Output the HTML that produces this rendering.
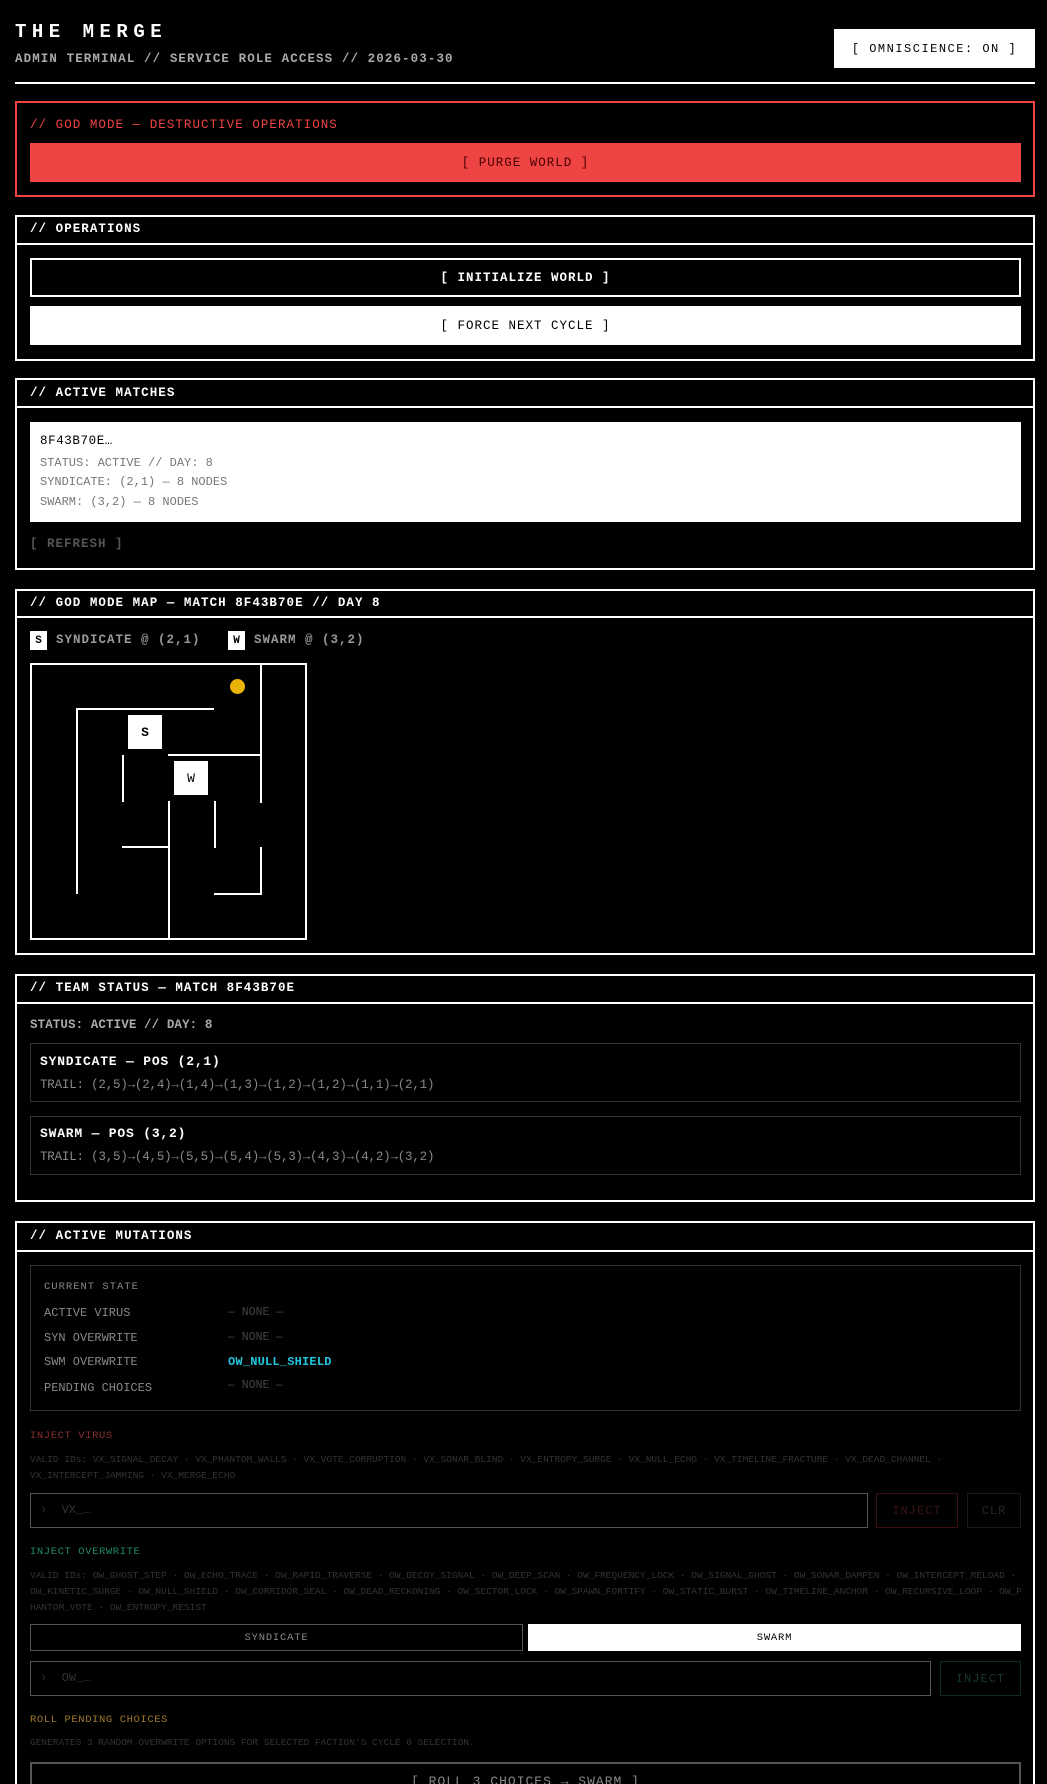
<!DOCTYPE html>
<html><head><meta charset="utf-8">
<style>
*{margin:0;padding:0;box-sizing:border-box}
html,body{width:1047px;height:1784px;background:#000;overflow:hidden}
body{position:relative;font-family:"Liberation Mono",monospace;color:#fff}
.a{position:absolute}
.t{position:absolute;white-space:nowrap;height:16px;line-height:16px}
.box{position:absolute;border:2px solid #fff}
.sep{position:absolute;height:2px;background:#fff}
.hd{font-size:12.5px;font-weight:bold;letter-spacing:1.05px;color:#fff}
.btn{position:absolute;display:flex;align-items:center;justify-content:center;font-size:12.5px;letter-spacing:1px;white-space:nowrap}
.w{position:absolute;background:#fff}
.ids{position:absolute;font-size:9.5px;line-height:16px;color:#333;white-space:nowrap;left:30px}
</style></head><body>

<div class="t" style="left:15px;top:22px;height:20px;line-height:20px;font-size:19px;font-weight:bold;letter-spacing:5.5px">THE MERGE</div>
<div class="t" style="left:15px;top:51px;font-size:12.5px;color:#aaa;font-weight:bold;letter-spacing:1.1px">ADMIN TERMINAL // SERVICE ROLE ACCESS // 2026-03-30</div>
<div class="btn" style="left:834px;top:29px;width:201px;height:39px;background:#fff;color:#000;font-size:12px;letter-spacing:1.5px">[ OMNISCIENCE: ON ]</div>
<div class="a" style="left:15px;top:82px;width:1020px;height:2px;background:#fff"></div>

<div class="box" style="left:15px;top:101px;width:1020px;height:96px;border-color:#ef4444"></div>
<div class="t hd" style="left:30px;top:117px;color:#ef4444;font-weight:normal">// GOD MODE — DESTRUCTIVE OPERATIONS</div>
<div class="btn" style="left:30px;top:143px;width:991px;height:39px;background:#ef4444;color:#4a0000">[ PURGE WORLD ]</div>

<div class="box" style="left:15px;top:215px;width:1020px;height:146px"></div>
<div class="t hd" style="left:30px;top:221px">// OPERATIONS</div>
<div class="sep" style="left:15px;top:243px;width:1020px"></div>
<div class="btn" style="left:30px;top:258px;width:991px;height:39px;border:2px solid #fff;font-weight:bold">[ INITIALIZE WORLD ]</div>
<div class="btn" style="left:30px;top:306px;width:991px;height:39px;background:#fff;color:#000">[ FORCE NEXT CYCLE ]</div>

<div class="box" style="left:15px;top:378px;width:1020px;height:192px"></div>
<div class="t hd" style="left:30px;top:385px">// ACTIVE MATCHES</div>
<div class="sep" style="left:15px;top:406px;width:1020px"></div>
<div class="a" style="left:30px;top:422px;width:991px;height:100px;background:#fff"></div>
<div class="t" style="left:40px;top:433px;font-size:12.5px;color:#000;letter-spacing:0.6px">8F43B70E…</div>
<div class="t" style="left:40px;top:455px;font-size:12px;color:#777">STATUS: ACTIVE // DAY: 8</div>
<div class="t" style="left:40px;top:474px;font-size:12px;color:#777">SYNDICATE: (2,1) — 8 NODES</div>
<div class="t" style="left:40px;top:494px;font-size:12px;color:#777">SWARM: (3,2) — 8 NODES</div>
<div class="t" style="left:30px;top:536px;font-size:12.5px;color:#555;font-weight:bold;letter-spacing:1px">[ REFRESH ]</div>

<div class="box" style="left:15px;top:589px;width:1020px;height:366px"></div>
<div class="t hd" style="left:30px;top:595px">// GOD MODE MAP — MATCH 8F43B70E // DAY 8</div>
<div class="sep" style="left:15px;top:616px;width:1020px"></div>
<div class="btn" style="left:30px;top:631px;width:17px;height:19px;background:#fff;color:#000;font-size:11px;letter-spacing:0;font-weight:bold">S</div>
<div class="t" style="left:56px;top:632px;font-size:12.5px;color:#999;font-weight:bold;letter-spacing:1px">SYNDICATE @ (2,1)</div>
<div class="btn" style="left:228px;top:631px;width:17px;height:19px;background:#fff;color:#000;font-size:11px;letter-spacing:0;font-weight:bold">W</div>
<div class="t" style="left:254px;top:632px;font-size:12.5px;color:#999;font-weight:bold;letter-spacing:1px">SWARM @ (3,2)</div>

<div class="a" style="left:30px;top:663px;width:277px;height:277px;border:2px solid #fff"></div>
<div class="w" style="left:76px;top:708px;width:138px;height:2px"></div>
<div class="w" style="left:76px;top:708px;width:2px;height:186px"></div>
<div class="w" style="left:260px;top:663px;width:2px;height:140px"></div>
<div class="w" style="left:168px;top:754px;width:94px;height:2px"></div>
<div class="w" style="left:122px;top:755px;width:2px;height:47px"></div>
<div class="w" style="left:168px;top:801px;width:2px;height:138px"></div>
<div class="w" style="left:214px;top:801px;width:2px;height:47px"></div>
<div class="w" style="left:122px;top:846px;width:48px;height:2px"></div>
<div class="w" style="left:260px;top:847px;width:2px;height:47px"></div>
<div class="w" style="left:214px;top:893px;width:48px;height:2px"></div>
<div class="btn" style="left:128px;top:715px;width:34px;height:34px;background:#fff;color:#000;font-size:13px;font-weight:bold;letter-spacing:0">S</div>
<div class="btn" style="left:174px;top:761px;width:34px;height:34px;background:#fff;color:#000;font-size:13px;letter-spacing:0">W</div>
<div class="a" style="left:230px;top:679px;width:15px;height:15px;border-radius:50%;background:#eab308"></div>

<div class="box" style="left:15px;top:974px;width:1020px;height:228px"></div>
<div class="t hd" style="left:30px;top:980px">// TEAM STATUS — MATCH 8F43B70E</div>
<div class="sep" style="left:15px;top:1002px;width:1020px"></div>
<div class="t" style="left:30px;top:1017px;font-size:12.5px;color:#aaa;font-weight:bold;letter-spacing:0.1px">STATUS: ACTIVE // DAY: 8</div>
<div class="a" style="left:30px;top:1043px;width:991px;height:59px;border:1px solid #333"></div>
<div class="t" style="left:40px;top:1054px;font-size:13px;font-weight:bold;letter-spacing:0.8px">SYNDICATE — POS (2,1)</div>
<div class="t" style="left:40px;top:1077px;font-size:12.5px;color:#888;letter-spacing:-0.2px">TRAIL: (2,5)→(2,4)→(1,4)→(1,3)→(1,2)→(1,2)→(1,1)→(2,1)</div>
<div class="a" style="left:30px;top:1116px;width:991px;height:59px;border:1px solid #333"></div>
<div class="t" style="left:40px;top:1126px;font-size:13px;font-weight:bold;letter-spacing:0.8px">SWARM — POS (3,2)</div>
<div class="t" style="left:40px;top:1149px;font-size:12.5px;color:#888;letter-spacing:-0.2px">TRAIL: (3,5)→(4,5)→(5,5)→(5,4)→(5,3)→(4,3)→(4,2)→(3,2)</div>

<div class="box" style="left:15px;top:1221px;width:1020px;height:600px"></div>
<div class="t hd" style="left:30px;top:1228px">// ACTIVE MUTATIONS</div>
<div class="sep" style="left:15px;top:1250px;width:1020px"></div>
<div class="a" style="left:30px;top:1265px;width:991px;height:146px;border:1px solid #333"></div>
<div class="t" style="left:44px;top:1279px;font-size:10.5px;color:#888;letter-spacing:1px">CURRENT STATE</div>
<div class="t" style="left:44px;top:1305px;font-size:12px;color:#888;letter-spacing:0">ACTIVE VIRUS</div>
<div class="t" style="left:228px;top:1305px;font-size:11.5px;color:#444">— NONE —</div>
<div class="t" style="left:44px;top:1330px;font-size:12px;color:#888;letter-spacing:0">SYN OVERWRITE</div>
<div class="t" style="left:228px;top:1330px;font-size:11.5px;color:#444">— NONE —</div>
<div class="t" style="left:44px;top:1354px;font-size:12px;color:#888;letter-spacing:0">SWM OVERWRITE</div>
<div class="t" style="left:228px;top:1354px;font-size:12px;color:#22c5e0;font-weight:bold;letter-spacing:0.2px">OW_NULL_SHIELD</div>
<div class="t" style="left:44px;top:1380px;font-size:12px;color:#888;letter-spacing:0">PENDING CHOICES</div>
<div class="t" style="left:228px;top:1378px;font-size:11.5px;color:#444">— NONE —</div>

<div class="t" style="left:30px;top:1428px;font-size:10.5px;color:#8a2f2f;letter-spacing:.6px">INJECT VIRUS</div>
<div class="ids" style="top:1452px">VALID IDs: VX_SIGNAL_DECAY · VX_PHANTOM_WALLS · VX_VOTE_CORRUPTION · VX_SONAR_BLIND · VX_ENTROPY_SURGE · VX_NULL_ECHO · VX_TIMELINE_FRACTURE · VX_DEAD_CHANNEL ·<br>VX_INTERCEPT_JAMMING · VX_MERGE_ECHO</div>
<div class="a" style="left:30px;top:1493px;width:838px;height:35px;border:1px solid #555"></div>
<div class="t" style="left:40px;top:1502px;font-size:12px;color:#333">›&nbsp;&nbsp;VX_…</div>
<div class="btn" style="left:876px;top:1493px;width:82px;height:35px;border:1px solid #3a0f0f;color:#3a1414;font-size:12px;letter-spacing:1px">INJECT</div>
<div class="btn" style="left:967px;top:1493px;width:54px;height:35px;border:1px solid #1a1a1a;color:#262626;font-size:12px;letter-spacing:1px">CLR</div>

<div class="t" style="left:30px;top:1544px;font-size:10.5px;color:#1f8a64;letter-spacing:.6px">INJECT OVERWRITE</div>
<div class="ids" style="top:1568px">VALID IDs: OW_GHOST_STEP · OW_ECHO_TRACE · OW_RAPID_TRAVERSE · OW_DECOY_SIGNAL · OW_DEEP_SCAN · OW_FREQUENCY_LOCK · OW_SIGNAL_GHOST · OW_SONAR_DAMPEN · OW_INTERCEPT_RELOAD ·<br>OW_KINETIC_SURGE · OW_NULL_SHIELD · OW_CORRIDOR_SEAL · OW_DEAD_RECKONING · OW_SECTOR_LOCK · OW_SPAWN_FORTIFY · OW_STATIC_BURST · OW_TIMELINE_ANCHOR · OW_RECURSIVE_LOOP · OW_P<br>HANTOM_VOTE · OW_ENTROPY_RESIST</div>
<div class="btn" style="left:30px;top:1624px;width:493px;height:27px;border:1px solid #555;color:#888;font-size:10.5px;letter-spacing:.8px">SYNDICATE</div>
<div class="btn" style="left:528px;top:1624px;width:493px;height:27px;background:#fff;color:#000;font-size:10.5px;letter-spacing:.8px">SWARM</div>
<div class="a" style="left:30px;top:1661px;width:901px;height:35px;border:1px solid #555"></div>
<div class="t" style="left:40px;top:1670px;font-size:12px;color:#333">›&nbsp;&nbsp;OW_…</div>
<div class="btn" style="left:940px;top:1661px;width:81px;height:35px;border:1px solid #0f2a1f;color:#163a2c;font-size:12px;letter-spacing:1px">INJECT</div>

<div class="t" style="left:30px;top:1712px;font-size:10.5px;color:#a07a2a;letter-spacing:.6px">ROLL PENDING CHOICES</div>
<div class="t" style="left:30px;top:1735px;font-size:9.5px;color:#333">GENERATES 3 RANDOM OVERWRITE OPTIONS FOR SELECTED FACTION'S CYCLE 0 SELECTION.</div>
<div class="a" style="left:30px;top:1762px;width:991px;height:50px;border:2px solid #555"></div>
<div class="t" style="left:0;width:1051px;text-align:center;top:1774px;font-size:13px;color:#888;letter-spacing:1px">[ ROLL 3 CHOICES → SWARM ]</div>

</body></html>
